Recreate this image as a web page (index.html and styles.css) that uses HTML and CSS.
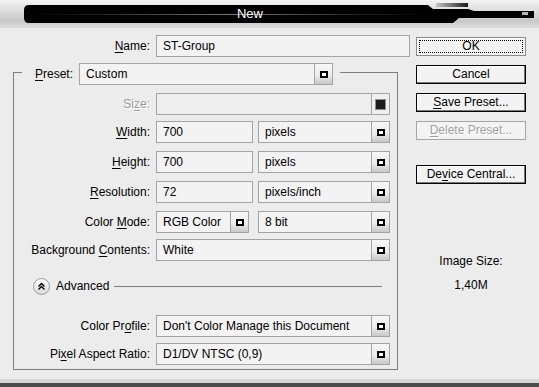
FILE: index.html
```html
<!DOCTYPE html>
<html lang="en">
<head>
    <meta charset="UTF-8">
    <title>New</title>
    <link rel="stylesheet" href="styles.css">
</head>
<body>
    <div class="window">
        <div class="titlebar">
            <svg class="title-bg" width="539" height="28" viewBox="0 0 539 28">
                <defs>
                    <linearGradient id="notch" x1="0" x2="1">
                        <stop offset="0" stop-color="#c4c4c4"/>
                        <stop offset="1" stop-color="#1a1a1a"/>
                    </linearGradient>
                    <linearGradient id="shine" x1="0" x2="1">
                        <stop offset="0" stop-color="#6a6a6a" stop-opacity="0"/>
                        <stop offset="0.5" stop-color="#7a7a7a"/>
                        <stop offset="1" stop-color="#6a6a6a" stop-opacity="0"/>
                    </linearGradient>
                </defs>
                <path d="M24 10 Q24 5 29 5 H428 L433 9 H468 L474 11 H534 V18 H459 L453 23 H29 Q24 23 24 18 Z" fill="#000"/>
                <rect x="436" y="3" width="32" height="4" fill="url(#notch)"/>
                <rect x="30" y="14" width="400" height="1" fill="url(#shine)"/>
                <rect x="522" y="12" width="6" height="3" fill="#b4b4b4"/>
            </svg>
            <span class="title">New</span>
        </div>

        <div class="content">
            <div class="main">
                <div class="row name-row">
                    <span class="label"><u>N</u>ame:</span>
                    <div class="field name-field">ST-Group</div>
                </div>

                <fieldset class="group">
                    <legend>
                        <span class="legend-inner">
                            <span class="preset-label"><u>P</u>reset:</span>
                            <div class="field select preset-field">
                                <span class="value">Custom</span>
                                <span class="drop"></span>
                            </div>
                        </span>
                    </legend>

                    <div class="row gap8">
                        <span class="label off">Si<u>z</u>e:</span>
                        <div class="field select wide off">
                            <span class="value"></span>
                            <span class="drop off"></span>
                        </div>
                    </div>
                    <div class="row gap6">
                        <span class="label"><u>W</u>idth:</span>
                        <div class="field short">700</div>
                        <div class="field select unit">
                            <span class="value">pixels</span>
                            <span class="drop"></span>
                        </div>
                    </div>
                    <div class="row gap8">
                        <span class="label"><u>H</u>eight:</span>
                        <div class="field short">700</div>
                        <div class="field select unit">
                            <span class="value">pixels</span>
                            <span class="drop"></span>
                        </div>
                    </div>
                    <div class="row gap8">
                        <span class="label"><u>R</u>esolution:</span>
                        <div class="field short">72</div>
                        <div class="field select unit">
                            <span class="value">pixels/inch</span>
                            <span class="drop"></span>
                        </div>
                    </div>
                    <div class="row gap8">
                        <span class="label">Color <u>M</u>ode:</span>
                        <div class="field select mode">
                            <span class="value">RGB Color</span>
                            <span class="drop"></span>
                        </div>
                        <div class="field select unit">
                            <span class="value">8 bit</span>
                            <span class="drop"></span>
                        </div>
                    </div>
                    <div class="row gap6">
                        <span class="label">Background <u>C</u>ontents:</span>
                        <div class="field select wide">
                            <span class="value">White</span>
                            <span class="drop"></span>
                        </div>
                    </div>

                    <div class="advanced">
                        <span class="adv-btn">
                            <svg width="9" height="9" viewBox="0 0 9 9">
                                <path d="M1.5 4.5 L4.5 1.5 L7.5 4.5 M1.5 7.5 L4.5 4.5 L7.5 7.5" fill="none" stroke="#000" stroke-width="1.4"/>
                            </svg>
                        </span>
                        <span class="adv-text">Advanced</span>
                        <span class="adv-line"></span>
                    </div>

                    <div class="row gap20">
                        <span class="label">Color Pr<u>o</u>file:</span>
                        <div class="field select wide">
                            <span class="value">Don't Color Manage this Document</span>
                            <span class="drop"></span>
                        </div>
                    </div>
                    <div class="row gap6">
                        <span class="label">Pi<u>x</u>el Aspect Ratio:</span>
                        <div class="field select wide">
                            <span class="value">D1/DV NTSC (0,9)</span>
                            <span class="drop"></span>
                        </div>
                    </div>
                </fieldset>
            </div>

            <div class="side">
                <div class="btn default">OK</div>
                <div class="btn">Cancel</div>
                <div class="btn"><u>S</u>ave Preset...</div>
                <div class="btn off"><u>D</u>elete Preset...</div>
                <div class="btn device">De<u>v</u>ice Central...</div>

                <div class="info">
                    <div>Image Size:</div>
                    <div class="info-value">1,40M</div>
                </div>
            </div>
        </div>
    </div>
</body>
</html>
```

FILE: styles.css
```css
body {
    margin: 0;
    padding: 0;
    font-family: "Liberation Sans", Arial, sans-serif;
    font-size: 12px;
    color: #000;
    background-color: #ececec;
}
u {
    text-decoration-thickness: 1px;
    text-underline-offset: 2px;
}
.window {
    width: 539px;
    height: 387px;
    box-sizing: border-box;
    background-color: #ececec;
    border-bottom: 4px solid #4b4b4b;
    box-shadow: inset 0 -4px 0 #d6d6d6;
    display: flex;
    flex-direction: column;
}

/* Title bar */
.titlebar {
    position: relative;
    height: 28px;
    flex: none;
    background: linear-gradient(#f4f4f4, #c8c8c8 75%, #dedede);
    display: flex;
    align-items: center;
    justify-content: center;
    padding-right: 39px;
    box-sizing: border-box;
    color: #fff;
    font-size: 13px;
}
.title-bg {
    position: absolute;
    left: 0;
    top: 0;
}
.title {
    position: relative;
    margin-top: -1px;
}

.content {
    display: flex;
    flex: 1;
}
.main {
    width: 411px;
}
.side {
    width: 110px;
    margin-left: 5px;
    display: flex;
    flex-direction: column;
}

/* Rows and fields */
.row {
    display: flex;
    align-items: center;
    height: 22px;
}
.label {
    width: 156px;
    box-sizing: border-box;
    padding-right: 6px;
    text-align: right;
    white-space: nowrap;
}
.label.off {
    color: #9a9a9a;
    text-shadow: 1px 1px #fff;
}
.name-row {
    margin-top: 7px;
}
.field {
    box-sizing: border-box;
    height: 22px;
    border: 1px solid #a4a4a4;
    background-color: #f3f3f3;
    display: flex;
    align-items: center;
    padding-left: 6px;
    white-space: nowrap;
}
.name-field {
    width: 254px;
}
.select {
    padding-right: 0;
}
.select .value {
    flex: 1;
}
.drop {
    width: 18px;
    height: 100%;
    box-sizing: border-box;
    border-left: 1px solid #a4a4a4;
    background: linear-gradient(#f7f7f7, #ededed 55%, #c8c8c8);
    display: flex;
    align-items: center;
    justify-content: center;
}
.drop::before {
    content: "";
    width: 4px;
    height: 3px;
    border: 2px solid #000;
    background-color: #fff;
}
.drop.off {
    background: #f0f0f0;
}
.drop.off::before {
    width: 9px;
    height: 9px;
    border: none;
    background-color: #1c1c1c;
    box-shadow: 0 0 0 1px #8c8c8c;
}
.field.off {
    background-color: #efefef;
}

/* Preset group */
.group {
    margin: 2px 0 0 13px;
    width: 385px;
    min-width: 0;
    box-sizing: border-box;
    border: 1px solid #7d7d7d;
    padding: 0 0 4px 0;
}
.group legend {
    padding: 4px 7px 0 13px;
    margin-left: 8px;
}
.legend-inner {
    display: flex;
    align-items: center;
}
.preset-label {
    margin-right: 6px;
}
.preset-field {
    width: 254px;
}
.group .label {
    width: 142px;
}
.gap6 {
    margin-top: 6px;
}
.gap8 {
    margin-top: 8px;
}
.gap20 {
    margin-top: 20px;
}
.wide {
    width: 234px;
}
.short {
    width: 97px;
    margin-right: 5px;
}
.mode {
    width: 93px;
    margin-right: 9px;
}
.unit {
    width: 132px;
}

/* Advanced toggle */
.advanced {
    display: flex;
    align-items: center;
    height: 18px;
    margin-top: 16px;
    padding: 0 15px 0 19px;
}
.adv-btn {
    width: 15px;
    height: 15px;
    border-radius: 50%;
    border: 1px solid #9a9a9a;
    background: linear-gradient(#ffffff, #dcdcdc);
    display: flex;
    align-items: center;
    justify-content: center;
}
.adv-text {
    margin-left: 6px;
}
.adv-line {
    flex: 1;
    height: 1px;
    margin-left: 5px;
    background-color: #7d7d7d;
}

/* Buttons */
.btn {
    height: 19px;
    box-sizing: border-box;
    margin-top: 9px;
    border: 1px solid #000;
    background-color: #f3f3f3;
    box-shadow: inset -1px -1px #7a7a7a, inset 1px 1px #fff;
    text-align: center;
    line-height: 17px;
}
.btn.default {
    border-color: #8a8a8a;
    box-shadow: inset 1px 1px #fff;
    outline: 1px dotted #000;
    outline-offset: -4px;
}
.btn.off {
    border-color: #a6a6a6;
    box-shadow: none;
    color: #a0a0a0;
    text-shadow: 1px 1px #fff;
}
.btn.device {
    margin-top: 25px;
}
.info {
    margin-top: 70px;
    text-align: center;
    line-height: 14px;
}
.info-value {
    margin-top: 10px;
}
```
